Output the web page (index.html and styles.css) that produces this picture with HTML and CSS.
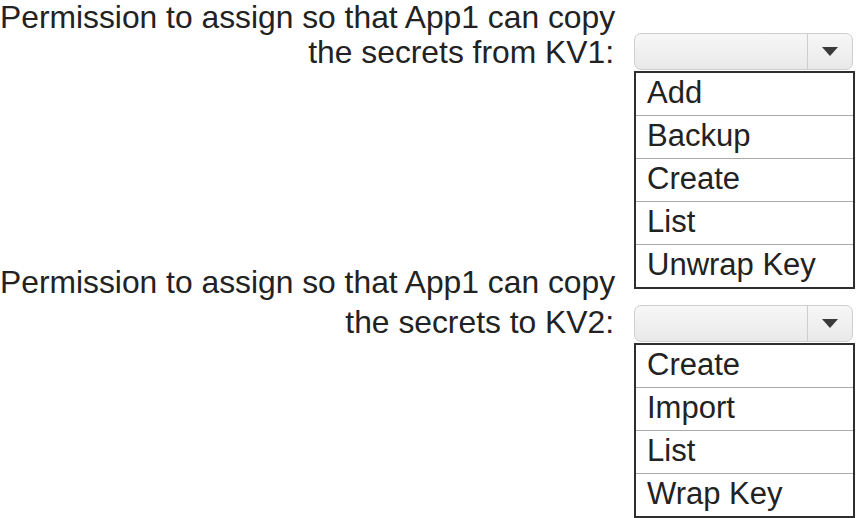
FILE: index.html
```html
<!DOCTYPE html>
<html lang="en">
<head>
  <meta charset="UTF-8">
  <meta name="viewport" content="width=device-width, initial-scale=1.0">
  <title>Key Vault permissions</title>
  <link rel="stylesheet" href="styles.css">
</head>
<body>
  <div class="page">
    <div class="labels">
      <p class="prompt">Permission to assign so that App1 can copy<br>the secrets from KV1:</p>
      <p class="prompt prompt-second">Permission to assign so that App1 can copy<br>the secrets to KV2:</p>
    </div>

    <div class="controls">
      <div class="select">
        <span class="value"></span>
        <span class="button"><span class="arrow"></span></span>
      </div>
      <ul class="options">
        <li>Add</li>
        <li>Backup</li>
        <li>Create</li>
        <li>List</li>
        <li>Unwrap Key</li>
      </ul>

      <div class="select select-second">
        <span class="value"></span>
        <span class="button"><span class="arrow"></span></span>
      </div>
      <ul class="options">
        <li>Create</li>
        <li>Import</li>
        <li>List</li>
        <li>Wrap Key</li>
      </ul>
    </div>
  </div>
</body>
</html>
```

FILE: styles.css
```css
/* Reset e tipografia */
* { box-sizing: border-box; margin: 0; padding: 0; }
body { font-family: 'Liberation Sans', Arial, sans-serif; background: #fff; color: #222; }

.page {
  display: flex;
  gap: 20px;
  width: 857px;
  height: 518px;
  overflow: hidden;
}

/* Textos da esquerda */
.labels {
  width: 614px;
  text-align: right;
}
.prompt {
  font-size: 31.8px;
  line-height: 35px;
  white-space: nowrap;
}
.prompt-second {
  margin-top: 192px;
  line-height: 40px;
}

/* Coluna dos controles */
.controls {
  width: 221px;
  padding-top: 33px;
}

.select {
  display: flex;
  width: 219px;
  height: 37px;
  margin-bottom: 1px;
  border: 1px solid #cfcfcf;
  border-radius: 7px;
  background: linear-gradient(#f7f7f7, #e9e9e9);
}
.select-second { margin-top: 16px; }
.select .value { flex: 1; }
.select .button {
  width: 45px;
  border-left: 1px solid #cdcdcd;
  display: flex;
  align-items: center;
  justify-content: center;
}
.arrow {
  width: 0;
  height: 0;
  border-left: 8px solid transparent;
  border-right: 8px solid transparent;
  border-top: 9px solid #3a3a3a;
}

/* Lista de opções */
.options {
  list-style: none;
  border: 2px solid #2e2e2e;
  background: #fff;
}
.options li {
  height: 42px;
  padding: 2px 11px 4px;
  font-size: 31px;
  line-height: 36px;
  white-space: nowrap;
}
.options li + li {
  border-top: 1px solid #a9a9a9;
  height: 43px;
}
```
